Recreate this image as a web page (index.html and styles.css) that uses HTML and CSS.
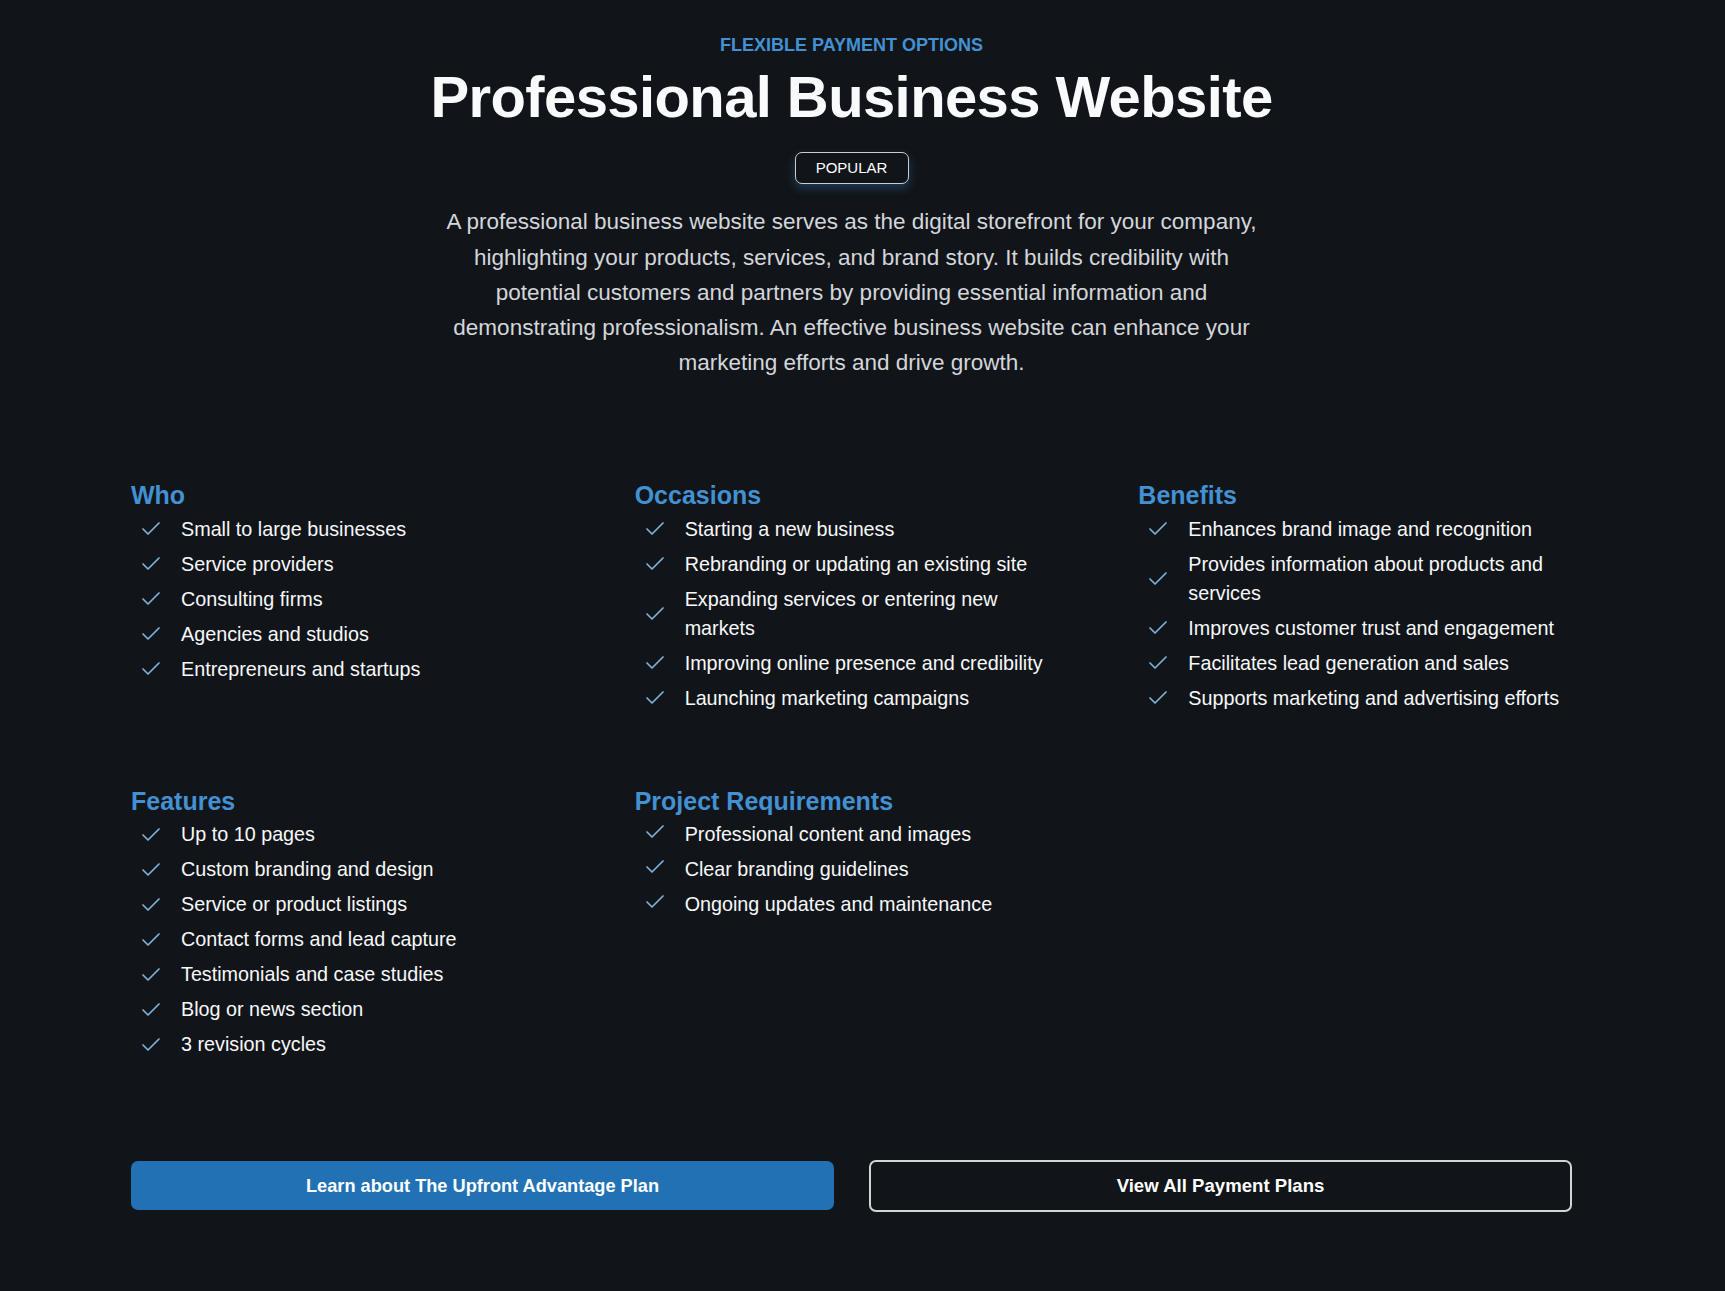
FILE: index.html
```html
<!DOCTYPE html>
<html lang="en">
<head>
<meta charset="utf-8">
<title>Professional Business Website</title>
<link rel="stylesheet" href="styles.css">
</head>
<body>
<main class="page">
  <header class="hero">
    <p class="eyebrow">FLEXIBLE PAYMENT OPTIONS</p>
    <h1 class="title">Professional Business Website</h1>
    <span class="badge">POPULAR</span>
    <p class="lead">A professional business website serves as the digital storefront for your company, highlighting your products, services, and brand story. It builds credibility with potential customers and partners by providing essential information and demonstrating professionalism. An effective business website can enhance your marketing efforts and drive growth.</p>
  </header>

  <section class="grid">
    <div class="group">
      <h3 class="group-title">Who</h3>
      <ul class="list">
        <li class="item"><svg class="check" viewBox="0 0 24 24"><path d="M20 6 9 17l-5-5"/></svg><span>Small to large businesses</span></li>
        <li class="item"><svg class="check" viewBox="0 0 24 24"><path d="M20 6 9 17l-5-5"/></svg><span>Service providers</span></li>
        <li class="item"><svg class="check" viewBox="0 0 24 24"><path d="M20 6 9 17l-5-5"/></svg><span>Consulting firms</span></li>
        <li class="item"><svg class="check" viewBox="0 0 24 24"><path d="M20 6 9 17l-5-5"/></svg><span>Agencies and studios</span></li>
        <li class="item"><svg class="check" viewBox="0 0 24 24"><path d="M20 6 9 17l-5-5"/></svg><span>Entrepreneurs and startups</span></li>
      </ul>
    </div>
    <div class="group">
      <h3 class="group-title">Occasions</h3>
      <ul class="list">
        <li class="item"><svg class="check" viewBox="0 0 24 24"><path d="M20 6 9 17l-5-5"/></svg><span>Starting a new business</span></li>
        <li class="item"><svg class="check" viewBox="0 0 24 24"><path d="M20 6 9 17l-5-5"/></svg><span>Rebranding or updating an existing site</span></li>
        <li class="item"><svg class="check" viewBox="0 0 24 24"><path d="M20 6 9 17l-5-5"/></svg><span>Expanding services or entering new markets</span></li>
        <li class="item"><svg class="check" viewBox="0 0 24 24"><path d="M20 6 9 17l-5-5"/></svg><span>Improving online presence and credibility</span></li>
        <li class="item"><svg class="check" viewBox="0 0 24 24"><path d="M20 6 9 17l-5-5"/></svg><span>Launching marketing campaigns</span></li>
      </ul>
    </div>
    <div class="group">
      <h3 class="group-title">Benefits</h3>
      <ul class="list">
        <li class="item"><svg class="check" viewBox="0 0 24 24"><path d="M20 6 9 17l-5-5"/></svg><span>Enhances brand image and recognition</span></li>
        <li class="item"><svg class="check" viewBox="0 0 24 24"><path d="M20 6 9 17l-5-5"/></svg><span>Provides information about products and services</span></li>
        <li class="item"><svg class="check" viewBox="0 0 24 24"><path d="M20 6 9 17l-5-5"/></svg><span>Improves customer trust and engagement</span></li>
        <li class="item"><svg class="check" viewBox="0 0 24 24"><path d="M20 6 9 17l-5-5"/></svg><span>Facilitates lead generation and sales</span></li>
        <li class="item"><svg class="check" viewBox="0 0 24 24"><path d="M20 6 9 17l-5-5"/></svg><span>Supports marketing and advertising efforts</span></li>
      </ul>
    </div>
    <div class="group">
      <h3 class="group-title">Features</h3>
      <ul class="list">
        <li class="item"><svg class="check" viewBox="0 0 24 24"><path d="M20 6 9 17l-5-5"/></svg><span>Up to 10 pages</span></li>
        <li class="item"><svg class="check" viewBox="0 0 24 24"><path d="M20 6 9 17l-5-5"/></svg><span>Custom branding and design</span></li>
        <li class="item"><svg class="check" viewBox="0 0 24 24"><path d="M20 6 9 17l-5-5"/></svg><span>Service or product listings</span></li>
        <li class="item"><svg class="check" viewBox="0 0 24 24"><path d="M20 6 9 17l-5-5"/></svg><span>Contact forms and lead capture</span></li>
        <li class="item"><svg class="check" viewBox="0 0 24 24"><path d="M20 6 9 17l-5-5"/></svg><span>Testimonials and case studies</span></li>
        <li class="item"><svg class="check" viewBox="0 0 24 24"><path d="M20 6 9 17l-5-5"/></svg><span>Blog or news section</span></li>
        <li class="item"><svg class="check" viewBox="0 0 24 24"><path d="M20 6 9 17l-5-5"/></svg><span>3 revision cycles</span></li>
      </ul>
    </div>
    <div class="group">
      <h3 class="group-title">Project Requirements</h3>
      <ul class="list list-top">
        <li class="item"><svg class="check" viewBox="0 0 24 24"><path d="M20 6 9 17l-5-5"/></svg><span>Professional content and images</span></li>
        <li class="item"><svg class="check" viewBox="0 0 24 24"><path d="M20 6 9 17l-5-5"/></svg><span>Clear branding guidelines</span></li>
        <li class="item"><svg class="check" viewBox="0 0 24 24"><path d="M20 6 9 17l-5-5"/></svg><span>Ongoing updates and maintenance</span></li>
      </ul>
    </div>
  </section>

  <div class="actions">
    <a class="btn btn-primary" href="#">Learn about The Upfront Advantage Plan</a>
    <a class="btn btn-outline" href="#">View All Payment Plans</a>
  </div>
</main>
</body>
</html>
```

FILE: styles.css
```css
* { box-sizing: border-box; }

html, body {
  margin: 0;
  padding: 0;
  background: #111519;
}

body {
  font-family: "Liberation Sans", Arial, sans-serif;
  color: #f5f6f7;
  min-height: 1291px;
}

.page {
  width: 1441px;
  margin-left: 131px;
  padding: 33px 0 80px;
}

.hero {
  display: flex;
  flex-direction: column;
  align-items: center;
  text-align: center;
}

.eyebrow {
  margin: 0;
  font-size: 18px;
  line-height: 24px;
  font-weight: 700;
  color: #4391d2;
}

.title {
  margin: 7.5px 0 0;
  font-size: 58px;
  line-height: 63.8px;
  font-weight: 700;
  letter-spacing: -0.6px;
  color: #f8fafc;
}

.badge {
  margin-top: 23.5px;
  width: 114px;
  height: 32px;
  display: flex;
  align-items: center;
  justify-content: center;
  border: 1.5px solid #c9ced3;
  border-radius: 7px;
  font-size: 15px;
  color: #ffffff;
  background: #111519;
  box-shadow: 0 4px 10px rgba(56, 132, 200, 0.35);
}

.lead {
  margin: 20.5px 0 0;
  max-width: 835px;
  font-size: 22.5px;
  line-height: 35.2px;
  color: #d3d6da;
}

.grid {
  margin-top: 99.5px;
  display: grid;
  grid-template-columns: repeat(3, 1fr);
  column-gap: 70px;
  row-gap: 72.5px;
}

.group-title {
  margin: 0 0 4.2px;
  font-size: 25px;
  line-height: 30.6px;
  font-weight: 700;
  color: #4391d2;
}

.list {
  list-style: none;
  margin: 0;
  padding: 0;
  display: flex;
  flex-direction: column;
  gap: 5.75px;
}

.item {
  display: flex;
  align-items: center;
  gap: 18px;
  padding-left: 8px;
  font-size: 19.75px;
  line-height: 29.25px;
  color: #f7f8f9;
}

.list-top .item {
  align-items: flex-start;
}

.check {
  flex: none;
  width: 24px;
  height: 24px;
  fill: none;
  stroke: #7eb0d9;
  stroke-width: 1.75;
  stroke-linecap: round;
  stroke-linejoin: round;
}

.actions {
  margin-top: 100px;
  display: grid;
  grid-template-columns: 1fr 1fr;
  gap: 35px;
  align-items: center;
}

.btn {
  display: block;
  text-align: center;
  text-decoration: none;
  line-height: 24px;
  font-weight: 700;
  color: #ffffff;
  border-radius: 7px;
}

.btn-primary {
  background: #2171b4;
  font-size: 18.2px;
  padding: 12.75px 16px;
}

.btn-outline {
  background: transparent;
  border: 2px solid #d2d5d8;
  font-size: 18.6px;
  padding: 12px 16px;
}
```
